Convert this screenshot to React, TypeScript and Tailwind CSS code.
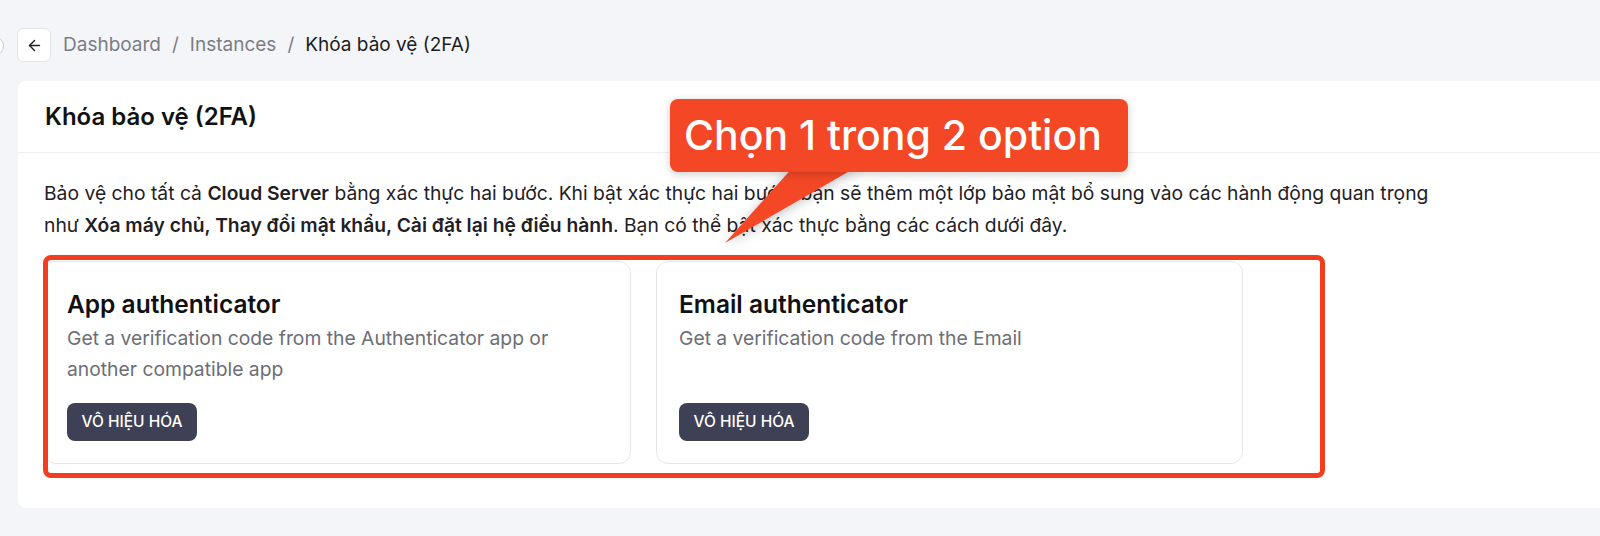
import { ArrowLeft } from "lucide-react";

type Method = {
  title: string;
  desc: string;
};

const methods: Method[] = [
  {
    title: "App authenticator",
    desc: "Get a verification code from the Authenticator app or another compatible app",
  },
  {
    title: "Email authenticator",
    desc: "Get a verification code from the Email",
  },
];

function MethodCard({ method }: { method: Method }) {
  return (
    <div className="flex flex-col rounded-xl border border-[#e6e7ea] bg-white px-[22px] pt-[24px] pb-[22px]">
      <h3 className="text-[24.5px] leading-[37px] font-semibold text-[#111]">{method.title}</h3>
      <p className="w-[505px] text-[19.3px] leading-[31px] text-[#6b6e76]">{method.desc}</p>
      <div className="mt-auto pt-[18px]">
        <button className="h-[38px] w-[130px] rounded-lg bg-[#3e4055] text-[15.5px] font-medium text-white">
          VÔ HIỆU HÓA
        </button>
      </div>
    </div>
  );
}

export default function App() {
  return (
    <div
      className="relative min-h-screen overflow-hidden bg-[#f4f5f8] pt-[28px]"
      style={{ fontFamily: "Inter, 'Noto Sans', sans-serif" }}
    >
      {/* cut off thing on the far left */}
      <div className="absolute left-[-16px] top-[36px] h-[20px] w-[20px] rounded-full border border-[#c9cbd0] bg-white" />

      {/* breadcrumb */}
      <div className="flex items-center pl-[17px]">
        <button className="flex h-[34px] w-[34px] items-center justify-center rounded-md border border-[#e3e4e8] bg-white text-[#222]">
          <ArrowLeft size={17} strokeWidth={2} />
        </button>
        <nav className="ml-[12px] flex items-center gap-[11px] text-[19px] text-[#7a7d85]">
          <span>Dashboard</span>
          <span>/</span>
          <span>Instances</span>
          <span>/</span>
          <span className="text-[#1c1d21]">Khóa bảo vệ (2FA)</span>
        </nav>
      </div>

      {/* main card */}
      <div className="ml-[18px] mt-[19px] rounded-l-lg bg-white">
        <div className="flex h-[72px] items-center border-b border-[#eceef1] px-[27px]">
          <h2 className="text-[24px] font-semibold text-[#111]">Khóa bảo vệ (2FA)</h2>
        </div>
        <div className="px-[26px] pt-[24px] pb-[44px]">
          <p className="whitespace-nowrap text-[19.3px] leading-[32px] text-[#1f2024]">
            Bảo vệ cho tất cả <b className="font-semibold">Cloud Server</b> bằng xác thực hai bước. Khi bật xác thực
            hai bước, bạn sẽ thêm một lớp bảo mật bổ sung vào các hành động quan trọng
            <br />
            như <b className="font-semibold">Xóa máy chủ, Thay đổi mật khẩu, Cài đặt lại hệ điều hành</b>. Bạn có thể
            bật xác thực bằng các cách dưới đây.
          </p>
          <div className="mt-[20px] grid grid-cols-[587px_587px] gap-[25px]">
            {methods.map((m) => (
              <MethodCard key={m.title} method={m} />
            ))}
          </div>
        </div>
      </div>

      {/* annotation: red frame */}
      <div className="absolute left-[43px] top-[255px] h-[223px] w-[1282px] rounded-lg border-[5px] border-[#f23d1f]" />

      {/* annotation: callout */}
      <svg
        className="absolute left-[700px] top-[160px] drop-shadow-[0_2px_6px_rgba(0,0,0,0.25)]"
        width="170"
        height="90"
        viewBox="700 160 170 90"
      >
        <polygon points="795,165 860,165 725,243" fill="#f44725" />
      </svg>
      <div className="absolute left-[670px] top-[99px] flex h-[73px] w-[458px] items-center rounded-lg bg-[#f44725] pl-[14px] text-[41px] font-medium text-white shadow-[0_2px_8px_rgba(0,0,0,0.2)]">
        Chọn 1 trong 2 option
      </div>
    </div>
  );
}
